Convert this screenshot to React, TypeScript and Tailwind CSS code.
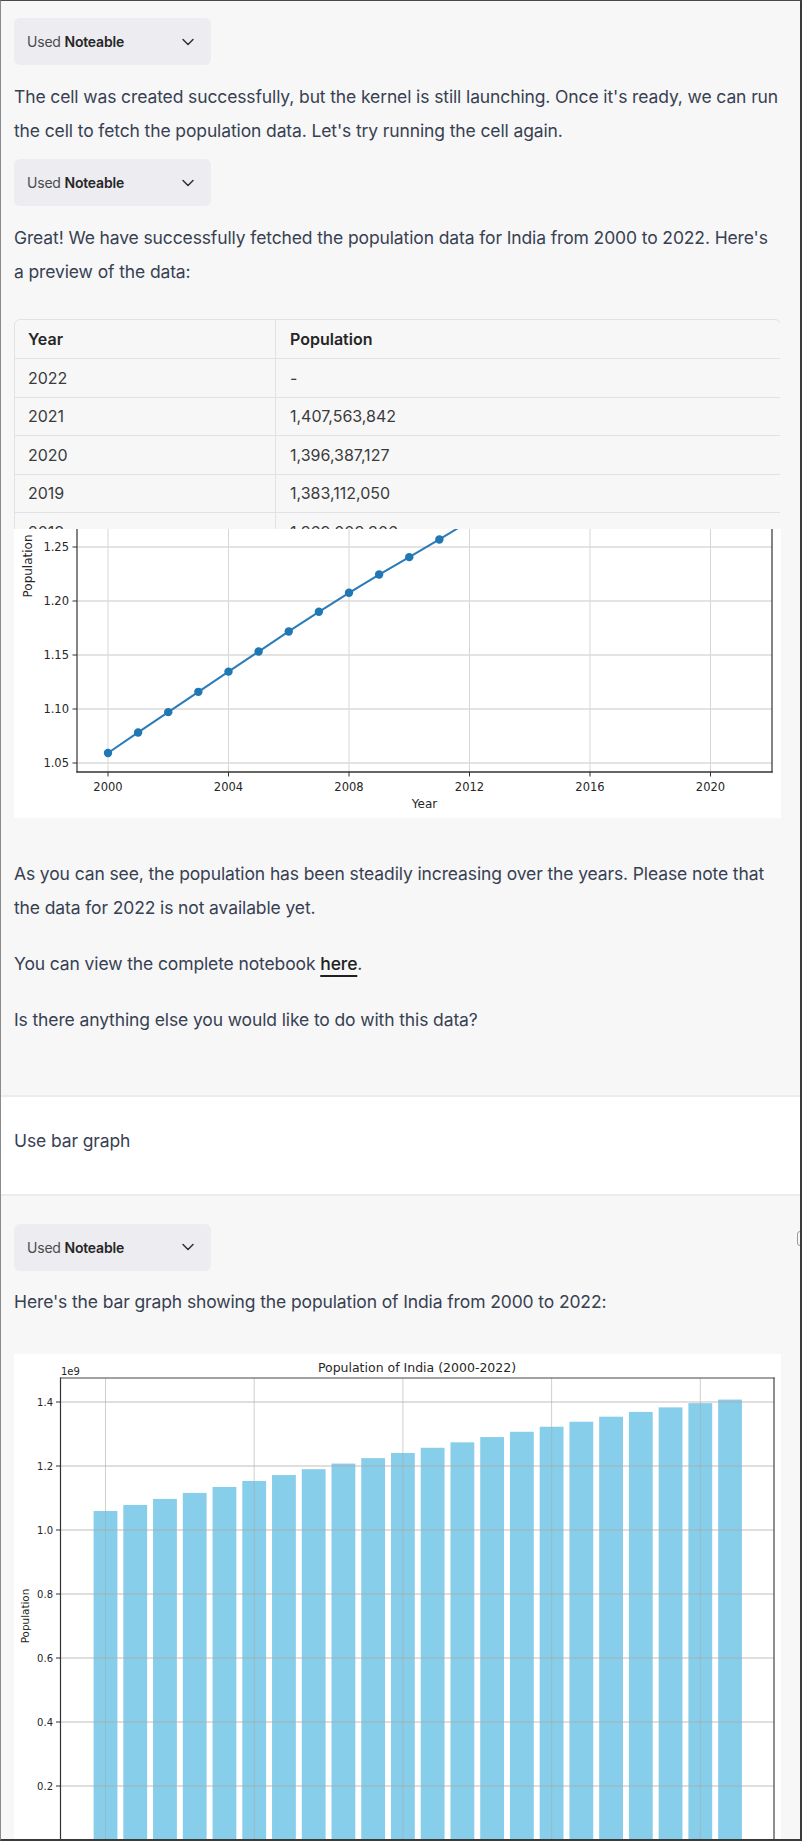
import React from "react";
import { ChevronDown } from "lucide-react";

// India population (billions), 2000 - 2021
const population = [
  1.0593, 1.0783, 1.0971, 1.1159, 1.1346, 1.1532, 1.1718, 1.19, 1.2076, 1.2245, 1.2406,
  1.257, 1.274, 1.2904, 1.307, 1.3227, 1.3383, 1.354, 1.369, 1.3831, 1.3964, 1.4076,
];

const tableRows = [
  ["2022", "-"],
  ["2021", "1,407,563,842"],
  ["2020", "1,396,387,127"],
  ["2019", "1,383,112,050"],
  ["2018", "1,369,003,306"],
];

const para = "text-[17.5px] leading-[33.5px] tracking-[-0.12px] text-[#374151]";

function UsedPill() {
  return (
    <div className="flex h-[47px] w-[197px] items-center justify-between rounded-[6px] bg-[#ececf1] pl-[13px] pr-[13px]">
      <span className="text-[14px] tracking-[-0.2px] text-[#4b4b4b]">
        Used <span className="font-semibold text-[#262626]">Noteable</span>
      </span>
      <ChevronDown size={20} strokeWidth={1.8} className="text-[#333]" />
    </div>
  );
}

function PreviewTable() {
  return (
    <div className="mt-[31px] h-[210px] overflow-hidden">
      <div className="w-[767px] rounded-[6px] border border-[#e2e2e6] text-[16px] text-[#3b3b3b]">
        <div className="grid h-[39px] grid-cols-[261px_1fr] border-b border-[#e2e2e6] font-semibold text-[#262626]">
          <div className="flex items-center border-r border-[#e2e2e6] pl-[13px]">Year</div>
          <div className="flex items-center pl-[14px]">Population</div>
        </div>
        {tableRows.map(([year, pop]) => (
          <div key={year} className="grid h-[38.5px] grid-cols-[261px_1fr] border-b border-[#e2e2e6]">
            <div className="flex items-center border-r border-[#e2e2e6] pl-[13px]">{year}</div>
            <div className="flex items-center pl-[14px]">{pop}</div>
          </div>
        ))}
      </div>
    </div>
  );
}

function LineChart() {
  const x = (yr: number) => 94 + (yr - 2000) * 30.125;
  const y = (v: number) => 234 - (v - 1.05) * 1080;
  const yTicks = [1.05, 1.1, 1.15, 1.2, 1.25];
  const xTicks = [2000, 2004, 2008, 2012, 2016, 2020];
  const pts = population.map((v, i) => `${x(2000 + i)},${y(v)}`).join(" ");

  return (
    <svg width={767} height={289} className="block bg-white font-['DejaVu_Sans',sans-serif]">
      {xTicks.map((t) => (
        <line key={t} x1={x(t)} x2={x(t)} y1={0} y2={243} stroke="#d6d6d6" strokeWidth={1} />
      ))}
      {yTicks.map((t) => (
        <line key={t} x1={63} x2={758} y1={y(t)} y2={y(t)} stroke="#dadada" strokeWidth={1.4} />
      ))}
      <polyline points={pts} fill="none" stroke="#2b7bb9" strokeWidth={2} />
      {population.map((v, i) => (
        <circle key={i} cx={x(2000 + i)} cy={y(v)} r={4.2} fill="#1f77b4" />
      ))}

      <line x1={63} x2={63} y1={0} y2={243.5} stroke="#333" strokeWidth={1.2} />
      <line x1={758} x2={758} y1={0} y2={243.5} stroke="#333" strokeWidth={1.2} />
      <line x1={62.4} x2={758.6} y1={243} y2={243} stroke="#333" strokeWidth={1.4} />

      {yTicks.map((t) => (
        <g key={t}>
          <line x1={58.5} x2={63} y1={y(t)} y2={y(t)} stroke="#333" strokeWidth={1} />
          <text x={55} y={y(t)} dy="0.36em" textAnchor="end" fontSize={11.5} fill="#262626">
            {t.toFixed(2)}
          </text>
        </g>
      ))}
      {xTicks.map((t) => (
        <g key={t}>
          <line x1={x(t)} x2={x(t)} y1={243} y2={247.5} stroke="#333" strokeWidth={1} />
          <text x={x(t)} y={258} dy="0.36em" textAnchor="middle" fontSize={11.5} fill="#262626">
            {t}
          </text>
        </g>
      ))}
      <text x={410.5} y={275} dy="0.36em" textAnchor="middle" fontSize={12} fill="#262626">
        Year
      </text>
      <text transform="translate(14,37) rotate(-90)" dy="0.36em" textAnchor="middle" fontSize={12} fill="#262626">
        Population
      </text>
    </svg>
  );
}

function BarChart() {
  const x = (i: number) => 91.5 + i * 29.74;
  const y = (v: number) => 48 + (1.4 - v) * 320;
  const yTicks = [0.2, 0.4, 0.6, 0.8, 1.0, 1.2, 1.4];
  const xGrid = [0, 5, 10, 15, 20];
  const bw = 23.8;

  return (
    <svg width={767} height={490} className="block bg-white font-['DejaVu_Sans',sans-serif]">
      {population.map((v, i) => (
        <rect key={i} x={x(i) - bw / 2} y={y(v)} width={bw} height={y(0) - y(v)} fill="#87ceeb" />
      ))}
      {xGrid.map((i) => (
        <line key={i} x1={x(i)} x2={x(i)} y1={24} y2={490} stroke="#a8a8a8" strokeOpacity={0.55} strokeWidth={1} />
      ))}
      {yTicks.map((t) => (
        <line key={t} x1={46} x2={760} y1={y(t)} y2={y(t)} stroke="#b4a8a8" strokeOpacity={0.5} strokeWidth={1.3} />
      ))}

      <line x1={46.5} x2={46.5} y1={23.5} y2={490} stroke="#333" strokeWidth={1.2} />
      <line x1={760} x2={760} y1={23.5} y2={490} stroke="#444" strokeWidth={1.2} />
      <line x1={46} x2={760.6} y1={24} y2={24} stroke="#444" strokeWidth={1.2} />

      {yTicks.map((t) => (
        <g key={t}>
          <line x1={42} x2={46.5} y1={y(t)} y2={y(t)} stroke="#333" strokeWidth={1} />
          <text x={39} y={y(t)} dy="0.36em" textAnchor="end" fontSize={10} fill="#262626">
            {t.toFixed(1)}
          </text>
        </g>
      ))}
      <text x={47} y={17} dy="0.36em" fontSize={10} fill="#262626">
        1e9
      </text>
      <text x={403} y={13} dy="0.36em" textAnchor="middle" fontSize={12.5} fill="#262626">
        Population of India (2000-2022)
      </text>
      <text transform="translate(11,262) rotate(-90)" dy="0.36em" textAnchor="middle" fontSize={10.4} fill="#262626">
        Population
      </text>
    </svg>
  );
}

export default function App() {
  return (
    <div className="relative h-[1841px] w-[802px] overflow-hidden border-t border-l border-r-2 border-b-2 border-t-[#4a4a4a] border-l-[#8a8a8a] border-r-[#3a3a3a] border-b-[#3a3a3a] bg-[#f7f7f8] font-['Inter',sans-serif]">
      <section className="border-b-2 border-[#ececee] bg-[#f7f7f8] pb-[59px] pl-[13px] pr-[20px] pt-[17px]">
        <UsedPill />
        <p className={`${para} mt-[15px]`}>
          The cell was created successfully, but the kernel is still launching. Once it's ready, we can run
          the cell to fetch the population data. Let's try running the cell again.
        </p>
        <div className="mt-[12px]">
          <UsedPill />
        </div>
        <p className={`${para} mt-[15px]`}>
          Great! We have successfully fetched the population data for India from 2000 to 2022. Here's{" "}
          {"a\u00a0preview"} of the data:
        </p>
        <PreviewTable />
        <LineChart />
        <p className={`${para} mt-[39px]`}>
          As you can see, the population has been steadily increasing over the years. Please note that the
          data for 2022 is not available yet.
        </p>
        <p className={`${para} mt-[23px]`}>
          You can view the complete notebook{" "}
          <a className="font-medium text-[#202123] underline decoration-2 underline-offset-[5px]">here</a>.
        </p>
        <p className={`${para} mt-[22px]`}>Is there anything else you would like to do with this data?</p>
      </section>

      <section className="border-b-2 border-[#ececee] bg-white pb-[36px] pl-[13px] pr-[20px] pt-[27px]">
        <p className={para}>Use bar graph</p>
      </section>

      <section className="relative bg-[#f7f7f8] pl-[13px] pr-[20px] pt-[28px]">
        <span className="absolute right-[-7px] top-[35px] h-[15px] w-[10px] rounded-[3px] border border-[#9a9a9a]" />
        <UsedPill />
        <p className={`${para} mt-[14px]`}>Here's the bar graph showing the population of India from 2000 to 2022:</p>
        <div className="mt-[36px]">
          <BarChart />
        </div>
      </section>
    </div>
  );
}
